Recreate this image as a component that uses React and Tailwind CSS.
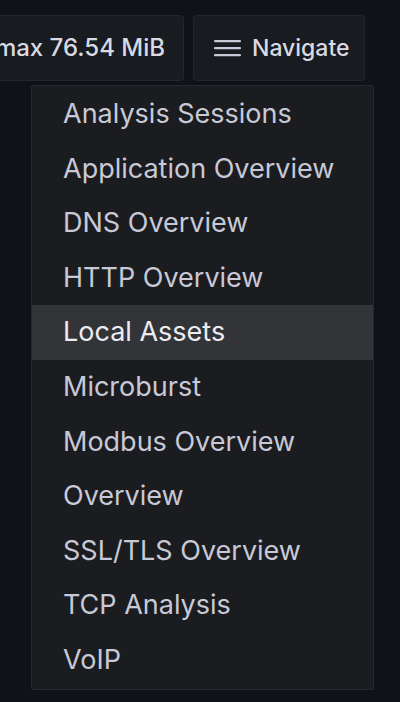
const items = [
  'Analysis Sessions',
  'Application Overview',
  'DNS Overview',
  'HTTP Overview',
  'Local Assets',
  'Microburst',
  'Modbus Overview',
  'Overview',
  'SSL/TLS Overview',
  'TCP Analysis',
  'VoIP',
];

const MenuIcon = () => (
  <svg width="28" height="18" viewBox="0 0 28 18" className="shrink-0">
    <rect x="0" y="1" width="27" height="2.2" rx="1" fill="#c8c9d6" />
    <rect x="0" y="8" width="27" height="2.2" rx="1" fill="#c8c9d6" />
    <rect x="0" y="15" width="27" height="2.2" rx="1" fill="#c8c9d6" />
  </svg>
);

export default function App() {
  return (
    <div
      className="w-[400px] h-[702px] overflow-hidden bg-[#111217] text-[#ccccdc]"
      style={{ fontFamily: 'Inter, "Noto Sans", sans-serif' }}
    >
      <div className="flex gap-[9px] pt-[15px] ml-[-40px]">
        <div className="h-[66px] w-[224px] flex items-center justify-end pr-[18px] bg-[#181b1f] border border-[#24262b] rounded-[4px] text-[24px] font-medium text-[#d8d9e3]">
          max 76.54 MiB
        </div>
        <div className="h-[66px] w-[172px] flex items-center gap-[10px] pl-[20px] bg-[#181b1f] border border-[#24262b] rounded-[4px] text-[23px] font-medium text-[#d8d9e3]">
          <MenuIcon />
          <span>Navigate</span>
        </div>
      </div>
      <div className="ml-[31px] mt-[4px] w-[343px] bg-[#1b1c20] border border-[#26282d] rounded-[2px] py-[1px]">
        {items.map((item) => (
          <div
            key={item}
            className={
              'h-[54.6px] flex items-center pl-[31px] text-[27px] ' +
              (item === 'Local Assets' ? 'bg-[#333438] text-[#ececf3]' : 'text-[#c8c9d6]')
            }
          >
            {item}
          </div>
        ))}
      </div>
    </div>
  );
}
